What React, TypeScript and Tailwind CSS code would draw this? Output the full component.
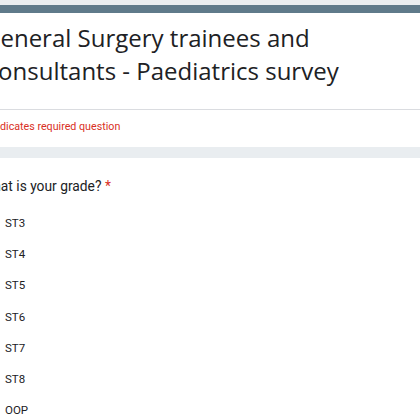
import React from "react";

const options = ["ST3", "ST4", "ST5", "ST6", "ST7", "ST8", "OOP"];

export default function App() {
  return (
    <div className="h-[420px] w-[420px] overflow-hidden bg-[#e9edf0]">
      <div className="-ml-[40px] w-[500px] pt-[5px]">
        {/* header card */}
        <div className="bg-white">
          <div className="h-[8px] bg-[#5f7a8a]" />
          <div className="pb-[22px] pl-[23px] pt-[8px] pr-10 text-[24px] leading-[33px] text-[#202124] [font-family:'Open_Sans',sans-serif]">
            General Surgery trainees and
            <br />
            Consultants - Paediatrics survey
          </div>
          <div className="h-px bg-[#dadce0]" />
          <div className="pl-[24px] pt-[9px] pb-[12px] text-[10.7px] leading-[16px] text-[#d93025] [font-family:Roboto,sans-serif]">
            * Indicates required question
          </div>
        </div>

        <div className="h-[11px]" />

        {/* question card */}
        <div className="bg-white pb-10 pt-[16px]">
          <div className="pl-[21px] text-[13.8px] leading-[24px] text-[#202124] [font-family:Roboto,sans-serif]">
            What is your grade? <span className="text-[#d93025]">*</span>
          </div>
          <div className="mt-[10px] flex flex-col pl-[13px]">
            {options.map((o) => (
              <label key={o} className="flex h-[31.2px] items-center gap-[12px]">
                <span className="h-[20px] w-[20px] shrink-0 rounded-full border-2 border-[#5f6368]" />
                <span className="text-[11.5px] text-[#202124] [font-family:Roboto,sans-serif]">{o}</span>
              </label>
            ))}
          </div>
        </div>
      </div>
    </div>
  );
}
